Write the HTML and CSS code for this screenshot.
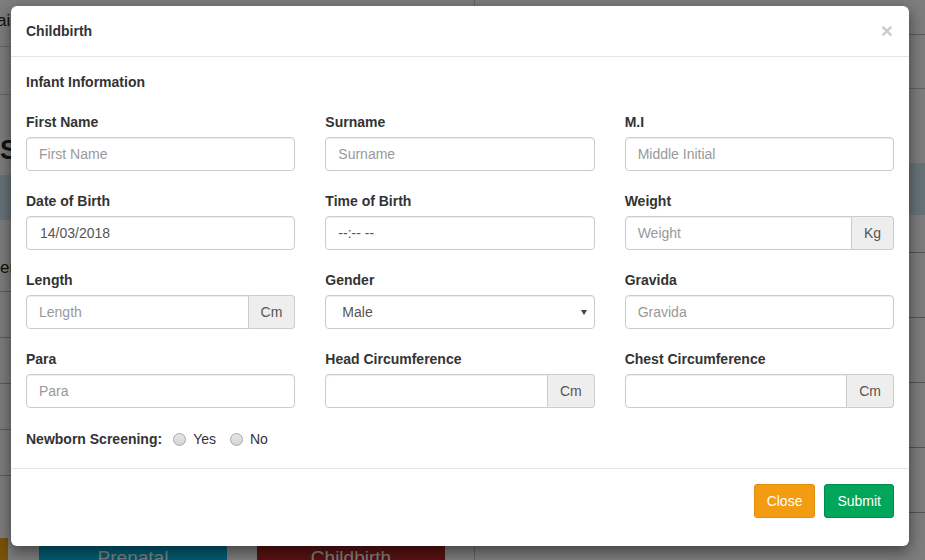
FILE: index.html
```html
<!DOCTYPE html>
<html lang="en">
<head>
<meta charset="utf-8">
<title>Childbirth</title>
<link rel="stylesheet" href="styles.css">
</head>
<body>
<div class="page">
  <div class="left-panel">
    <div class="l-top"><span class="l-top-text">ain</span></div>
    <div class="l-sub"></div>
    <div class="l-heading">S</div>
    <div class="l-band"></div>
    <div class="l-row l-row-text">er</div>
    <div class="l-row"></div>
    <div class="l-row"></div>
    <div class="l-row"></div>
    <div class="l-row"></div>
    <div class="l-bottom">
      <div class="l-orange"></div>
      <div class="l-btn l-btn-aqua">Prenatal</div>
      <div class="l-btn l-btn-red">Childbirth</div>
    </div>
  </div>
  <div class="right-panel">
    <div class="r-top"></div>
    <div class="r-sub"></div>
    <div class="r-gap"></div>
    <div class="r-band"></div>
    <div class="r-row r-first"></div>
    <div class="r-row"></div>
    <div class="r-row"></div>
    <div class="r-row"></div>
    <div class="r-row"></div>
    <div class="r-zero">0</div>
  </div>
</div>
<div class="backdrop"></div>

<div class="modal">
  <div class="modal-header">
    <span class="modal-title">Childbirth</span>
    <span class="close">&times;</span>
  </div>
  <div class="modal-body">
    <div class="section-title">Infant Information</div>
    <div class="form-grid">
      <div class="form-group">
        <label class="lbl">First Name</label>
        <input class="form-control" type="text" placeholder="First Name">
      </div>
      <div class="form-group">
        <label class="lbl">Surname</label>
        <input class="form-control" type="text" placeholder="Surname">
      </div>
      <div class="form-group">
        <label class="lbl">M.I</label>
        <input class="form-control" type="text" placeholder="Middle Initial">
      </div>

      <div class="form-group">
        <label class="lbl">Date of Birth</label>
        <input class="form-control date-input" type="text" value="14/03/2018">
      </div>
      <div class="form-group">
        <label class="lbl">Time of Birth</label>
        <input class="form-control" type="text" value="--:-- --">
      </div>
      <div class="form-group">
        <label class="lbl">Weight</label>
        <div class="input-group">
          <input class="form-control" type="text" placeholder="Weight">
          <span class="addon">Kg</span>
        </div>
      </div>

      <div class="form-group">
        <label class="lbl">Length</label>
        <div class="input-group">
          <input class="form-control" type="text" placeholder="Length">
          <span class="addon">Cm</span>
        </div>
      </div>
      <div class="form-group">
        <label class="lbl">Gender</label>
        <div class="select-wrap">
          <select class="form-control select">
            <option>Male</option>
            <option>Female</option>
          </select>
        </div>
      </div>
      <div class="form-group">
        <label class="lbl">Gravida</label>
        <input class="form-control" type="text" placeholder="Gravida">
      </div>

      <div class="form-group">
        <label class="lbl">Para</label>
        <input class="form-control" type="text" placeholder="Para">
      </div>
      <div class="form-group">
        <label class="lbl">Head Circumference</label>
        <div class="input-group">
          <input class="form-control" type="text">
          <span class="addon">Cm</span>
        </div>
      </div>
      <div class="form-group">
        <label class="lbl">Chest Circumference</label>
        <div class="input-group">
          <input class="form-control" type="text">
          <span class="addon">Cm</span>
        </div>
      </div>
    </div>

    <div class="screening">
      <span class="lbl screening-lbl">Newborn Screening:</span>
      <label class="radio"><input type="radio" name="nbs" class="radio-input"><span class="radio-text">Yes</span></label>
      <label class="radio"><input type="radio" name="nbs" class="radio-input"><span class="radio-text">No</span></label>
    </div>
  </div>
  <div class="modal-footer">
    <button class="btn btn-warning" type="button">Close</button>
    <button class="btn btn-success" type="button">Submit</button>
  </div>
</div>
</body>
</html>
```

FILE: styles.css
```css
* {
  box-sizing: border-box;
}

html, body {
  margin: 0;
  padding: 0;
  width: 925px;
  height: 560px;
  overflow: hidden;
}

body {
  font-family: "Liberation Sans", Arial, Helvetica, sans-serif;
  font-size: 14px;
  line-height: 20px;
  color: #333;
  background: #fafafa;
  position: relative;
}

/* ---------- background page ---------- */
.page {
  display: flex;
  width: 925px;
  height: 560px;
}

.left-panel {
  width: 475px;
  border-right: 1px solid #c8c8c8;
  display: flex;
  flex-direction: column;
}

.l-top {
  height: 47px;
  border-bottom: 1px solid #d0d0d0;
  padding-top: 11px;
  font-size: 17px;
  color: #222;
  text-indent: -3px;
}

.l-sub {
  height: 48px;
  border-bottom: 1px solid #d0d0d0;
}

.l-heading {
  height: 80px;
  font-size: 27px;
  font-weight: bold;
  color: #222;
  padding-top: 42px;
  line-height: 27px;
}

.l-band {
  height: 45px;
  background: #d0e6f2;
}

.l-row {
  height: 46px;
  border-bottom: 1px solid #b8b8b8;
}

.l-row-text {
  font-size: 17px;
  line-height: 46px;
  color: #222;
  height: 72px;
  padding-top: 25px;
}

.l-bottom {
  flex: 1;
  display: flex;
  align-items: flex-end;
}

.l-orange {
  width: 8px;
  height: 22px;
  background: #f5a514;
  margin-right: 31px;
}

.l-btn {
  height: 40px;
  width: 188px;
  color: #fff;
  font-size: 19px;
  line-height: 22px;
  text-align: center;
  padding-top: 1px;
  margin-bottom: -26px;
}

.l-btn-aqua {
  background: #00b6e2;
  margin-right: 30px;
}

.l-btn-red {
  background: #ae2424;
}

.right-panel {
  flex: 1;
  display: flex;
  flex-direction: column;
}

.r-top {
  height: 35px;
  border-bottom: 1px solid #b4b4b4;
}

.r-sub {
  height: 54px;
  border-bottom: 1px solid #c4c4c4;
}

.r-gap {
  height: 74px;
}

.r-band {
  height: 52px;
  background: #d0e6f2;
}

.r-row {
  height: 65px;
  border-bottom: 1px solid #a8a8a8;
}

.r-first {
  height: 38px;
}

.r-zero {
  font-size: 12px;
  line-height: 14px;
  color: #333;
  padding-left: 149px;
  padding-top: 21px;
}

.backdrop {
  position: absolute;
  inset: 0;
  background: rgba(0, 0, 0, 0.5);
}

/* ---------- modal ---------- */
.modal {
  position: absolute;
  left: 11px;
  top: 6px;
  width: 898px;
  background: #fff;
  border-radius: 6px;
  box-shadow: 0 5px 15px rgba(0, 0, 0, 0.5);
}

.modal-header {
  display: flex;
  justify-content: space-between;
  align-items: center;
  padding: 15px;
  border-bottom: 1px solid #e5e5e5;
}

.modal-title {
  font-weight: bold;
  font-size: 14px;
  line-height: 20px;
  color: #333;
}

.close {
  font-size: 21px;
  font-weight: bold;
  line-height: 1;
  color: #000;
  opacity: 0.2;
  margin-top: -2px;
  margin-right: 1px;
}

.modal-body {
  padding: 15px 15px 19px 15px;
}

.section-title {
  font-weight: bold;
  line-height: 20px;
  margin-bottom: 20px;
}

.form-grid {
  display: grid;
  grid-template-columns: repeat(3, 1fr);
  column-gap: 30px;
  row-gap: 20px;
}

.lbl {
  display: block;
  font-weight: bold;
  line-height: 20px;
  margin-bottom: 5px;
  color: #333;
}

.form-control {
  display: block;
  width: 100%;
  height: 34px;
  padding: 6px 12px;
  font-family: inherit;
  font-size: 14px;
  line-height: 20px;
  color: #555;
  background: #fff;
  border: 1px solid #ccc;
  border-radius: 4px;
  box-shadow: inset 0 1px 1px rgba(0, 0, 0, 0.075);
  outline: none;
}

.form-control::placeholder {
  color: #999;
}

.date-input {
  padding-left: 13px;
}

.input-group {
  display: flex;
}

.input-group .form-control {
  flex: 1;
  min-width: 0;
  border-top-right-radius: 0;
  border-bottom-right-radius: 0;
}

.addon {
  display: block;
  padding: 6px 12px;
  height: 34px;
  font-size: 14px;
  line-height: 20px;
  color: #555;
  background: #eee;
  border: 1px solid #ccc;
  border-left: 0;
  border-radius: 0 4px 4px 0;
}

.select-wrap {
  position: relative;
}

.select {
  appearance: none;
  -webkit-appearance: none;
  padding-left: 16px;
}

.select-wrap::after {
  content: "";
  position: absolute;
  right: 8px;
  top: 15px;
  border-left: 3px solid transparent;
  border-right: 3px solid transparent;
  border-top: 5px solid #444;
}

.screening {
  display: flex;
  align-items: center;
  margin-top: 21px;
  height: 20px;
}

.screening-lbl {
  display: inline-block;
  margin: 0 11px 0 0;
}

.radio {
  display: flex;
  align-items: center;
  margin-right: 14px;
}

.radio-input {
  appearance: none;
  -webkit-appearance: none;
  width: 13px;
  height: 13px;
  margin: 0 7px 0 0;
  border: 1px solid #a6a6a6;
  border-radius: 50%;
  background: linear-gradient(#e8e8e8, #d4d4d4);
}

.radio-text {
  font-weight: normal;
  color: #333;
}

.modal-footer {
  display: flex;
  justify-content: flex-end;
  gap: 9px;
  padding: 15px 15px 28px 15px;
  border-top: 1px solid #e5e5e5;
}

.btn {
  font-family: inherit;
  font-size: 14px;
  line-height: 20px;
  padding: 6px 12px;
  height: 34px;
  border: 1px solid transparent;
  border-radius: 3px;
  color: #fff;
  cursor: pointer;
}

.btn-warning {
  background: #f39c12;
  border-color: #e08e0b;
}

.btn-success {
  background: #00a65a;
  border-color: #008d4c;
}
```
